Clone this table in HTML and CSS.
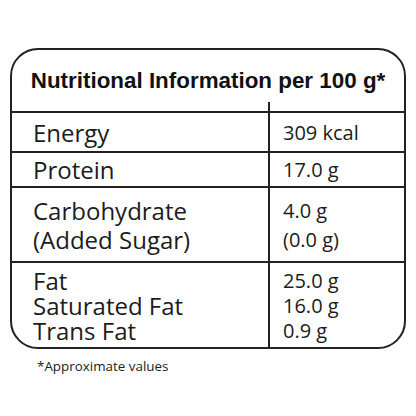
FILE: index.html
```html
<!DOCTYPE html>
<html lang="en">

<head>
    <meta charset="UTF-8">
    <meta name="viewport" content="width=device-width, initial-scale=1.0">
    <title>Nutritional Information</title>
    <link rel="stylesheet" href="styles.css">
</head>

<body>

    <div class="panel">
        <div class="panel-head">Nutritional Information per 100 g*</div>

        <div class="row row-energy">
            <div class="label"><span>Energy</span></div>
            <div class="value first-value"><span>309 kcal</span></div>
        </div>

        <div class="row row-protein">
            <div class="label"><span>Protein</span></div>
            <div class="value"><span>17.0 g</span></div>
        </div>

        <div class="row row-carb">
            <div class="label">
                <span>Carbohydrate</span>
                <span>(Added Sugar)</span>
            </div>
            <div class="value">
                <span>4.0 g</span>
                <span>(0.0 g)</span>
            </div>
        </div>

        <div class="row row-fat">
            <div class="label">
                <span>Fat</span>
                <span>Saturated Fat</span>
                <span>Trans Fat</span>
            </div>
            <div class="value">
                <span>25.0 g</span>
                <span>16.0 g</span>
                <span>0.9 g</span>
            </div>
        </div>
    </div>

    <p class="note">*Approximate values</p>

</body>

</html>
```

FILE: styles.css
```css
body {
    font-family: "Open Sans", "Noto Sans", sans-serif;
    background-color: #ffffff;
    color: #1c1c1c;
    margin: 0;
    padding: 0;
}

.panel {
    margin: 48px 10px 0;
    border: 2px solid #222;
    border-radius: 28px;
}

.panel-head {
    height: 61px;
    display: flex;
    align-items: center;
    justify-content: center;
    font-family: "Liberation Sans", Arial, sans-serif;
    font-weight: bold;
    font-size: 22.4px;
    color: #111;
    border-bottom: 2px solid #222;
}

.row {
    display: grid;
    grid-template-columns: 258px 1fr;
    border-bottom: 2px solid #222;
}

.row:last-child {
    border-bottom: none;
}

.label,
.value {
    display: flex;
    flex-direction: column;
    justify-content: center;
}

.label span,
.value span {
    display: block;
    white-space: nowrap;
}

.label {
    font-size: 24px;
    padding-left: 21px;
    border-right: 2px solid #222;
}

.value {
    font-size: 20px;
    padding-left: 13px;
}

.first-value {
    position: relative;
}

/* little tick of the divider poking above the header line */
.first-value::before {
    content: "";
    position: absolute;
    left: -2px;
    top: -11px;
    width: 2px;
    height: 10px;
    background: #222;
}

.row-energy {
    height: 38px;
    line-height: 29px;
}

.row-protein {
    height: 33px;
    line-height: 29px;
}

.row-carb {
    height: 73px;
    line-height: 29px;
}

.row-fat {
    height: 84px;
    line-height: 25px;
}

.note {
    margin: 8px 0 0 37px;
    font-size: 13.4px;
    color: #222;
}
```
